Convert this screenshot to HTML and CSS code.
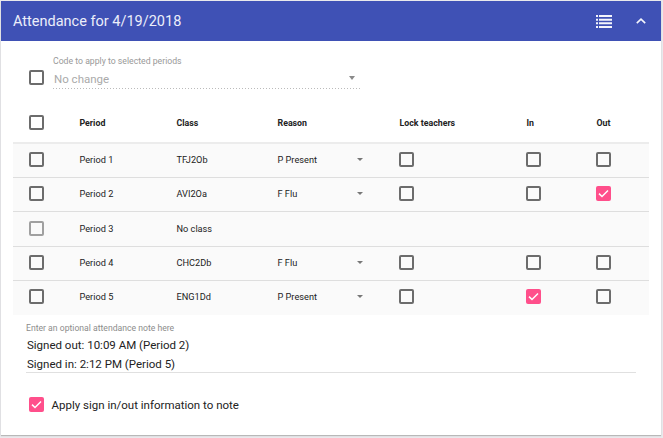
FILE: index.html
```html
<!DOCTYPE html>
<html lang="en">
<head>
<meta charset="utf-8">
<title>Attendance</title>
<link rel="stylesheet" href="styles.css">
</head>
<body>
<section class="card">
  <header class="bar">
    <h1 class="title"><span>Attendance for 4/19/2018</span></h1>
    <svg class="list-icon" width="16" height="13" viewBox="0 0 16 13"><path d="M0 0h2v2H0zM3 0h13v2H3zM0 3.7h2v2H0zM3 3.7h13v2H3zM0 7.3h2v2H0zM3 7.3h13v2H3zM0 11h2v2H0zM3 11h13v2H3z"/></svg>
    <svg class="chevron" width="10" height="6" viewBox="0 0 10 6"><path d="M.8 5.2 5 1.2l4.200 4"/></svg>
  </header>
  <div class="apply">
    <span class="box"></span>
    <div class="field">
      <div class="field-label"><span>Code to apply to selected periods</span></div>
      <div class="select"><span>No change</span><i class="caret"></i></div>
    </div>
  </div>
  <div class="table">
    <div class="row head"><span class="box"></span><b>Period</b><b>Class</b><b>Reason</b><b>Lock teachers</b><b>In</b><b>Out</b></div>
    <div class="row short"><span class="box"></span><span>Period 1</span><span>TFJ2Ob</span><div class="reason"><span>P Present</span><i class="caret small"></i></div><span class="box"></span><span class="box"></span><span class="box"></span></div>
    <div class="row short"><span class="box"></span><span>Period 2</span><span>AVI2Oa</span><div class="reason"><span>F Flu</span><i class="caret small"></i></div><span class="box"></span><span class="box"></span><span class="box on"><svg viewBox="0 0 15 15"><path d="M3 7.600 6 10.500 12 4.500"/></svg></span></div>
    <div class="row"><span class="box off"></span><span>Period 3</span><span>No class</span></div>
    <div class="row short"><span class="box"></span><span>Period 4</span><span>CHC2Db</span><div class="reason"><span>F Flu</span><i class="caret small"></i></div><span class="box"></span><span class="box"></span><span class="box"></span></div>
    <div class="row short"><span class="box"></span><span>Period 5</span><span>ENG1Dd</span><div class="reason"><span>P Present</span><i class="caret small"></i></div><span class="box"></span><span class="box on"><svg viewBox="0 0 15 15"><path d="M3 7.600 6 10.500 12 4.500"/></svg></span><span class="box"></span></div>
  </div>
  <div class="note">
    <div class="note-label"><span>Enter an optional attendance note here</span></div>
    <div class="note-text"><span>Signed out: 10:09 AM (Period 2)</span><br><span>Signed in: 2:12 PM (Period 5)</span></div>
  </div>
  <div class="confirm"><span class="box on"><svg viewBox="0 0 15 15"><path d="M3 7.600 6 10.500 12 4.500"/></svg></span><span>Apply sign in/out information to note</span></div>
</section>
</body>
</html>
```

FILE: styles.css
```css
* { box-sizing: border-box; }
body {
  margin: 0;
  padding: 1px;
  height: 438px;
  background: #e9e9ec;
  font-family: Roboto, "Liberation Sans", sans-serif;
  color: #222;
}
.card {
  width: 660px;
  height: 434px;
  background: #fff;
  box-shadow: 0 1px 1px #b8b8b8;
}
.bar {
  height: 40px;
  padding: 0 15px 0 12px;
  background: #3f51b5;
  display: flex;
  align-items: center;
}
.title {
  flex: 1;
  margin: 0;
  font-size: 14.500px;
  font-weight: 400;
  color: #eceefa;
}
.list-icon { fill: #f4f5fc; }
.chevron { margin-left: 24px; fill: none; stroke: #f4f5fc; stroke-width: 1.6; }
.box {
  display: block;
  flex: none;
  width: 15px;
  height: 15px;
  border: 2px solid #6c6c6c;
  border-radius: 2px;
}
.box.off { border-color: #a0a0a0; }
.box.on { border: 0; background: #ff4f8b; }
.box svg { display: block; fill: none; stroke: #fff; stroke-width: 1.5; }
.apply { height: 60px; padding: 13px 0 0 28px; display: flex; }
.apply .box { margin-top: 16px; }
.field { margin-left: 9px; width: 307px; }
.field-label { height: 14px; font-size: 8.700px; line-height: 14px; color: #999; }
.select {
  height: 21px;
  padding: 0 5px 2px 1px;
  display: flex;
  align-items: center;
  justify-content: space-between;
  font-size: 11.500px;
  color: #aaa;
  background: repeating-linear-gradient(90deg, #bbb 0 1px, transparent 1px 3px) bottom / 100% 1px no-repeat;
}
.select span { padding-top: 2px; }
.caret {
  width: 0;
  border: 3.5px solid transparent;
  border-top: 4px solid #8a8a8a;
  border-bottom: 0;
}
.caret.small { border-width: 3px 3px 0; border-top-color: #777; }
.table { margin: 0 12px; font-size: 9.200px; }
.row {
  height: 35px;
  display: grid;
  grid-template-columns: 50.500px 97px 101px 122px 127px 70px 1fr;
  padding: 0 0 2px 16px;
  align-items: center;
  background: #fafafa;
  border-bottom: 1px solid #dedede;
}
.row.short { height: 34px; }
.row.head { height: 43px; padding: 2px 0 0 16px; background: #fff; border-bottom: 2px solid #ececec; font-size: 8.800px; }
.row:last-child { border-bottom-color: #fafafa; }
.row b { font-weight: 700; }
.row .box:not(:first-child) { margin-left: -.6px; }
.reason { display: flex; align-items: center; justify-content: space-between; width: 85px; }
.note {
  margin: 0 25px;
  height: 58px;
  padding-top: 6px;
  border-bottom: 1px solid #e0e0e0;
}
.note-label { height: 15px; line-height: 14px; font-size: 8.650px; color: #8c8c8c; }
.note-text { padding-left: 1px; font-size: 11.500px; line-height: 18.500px; }
.confirm { margin: 24px 0 0 28px; display: flex; align-items: center; gap: 7.500px; font-size: 11.500px; }
```
